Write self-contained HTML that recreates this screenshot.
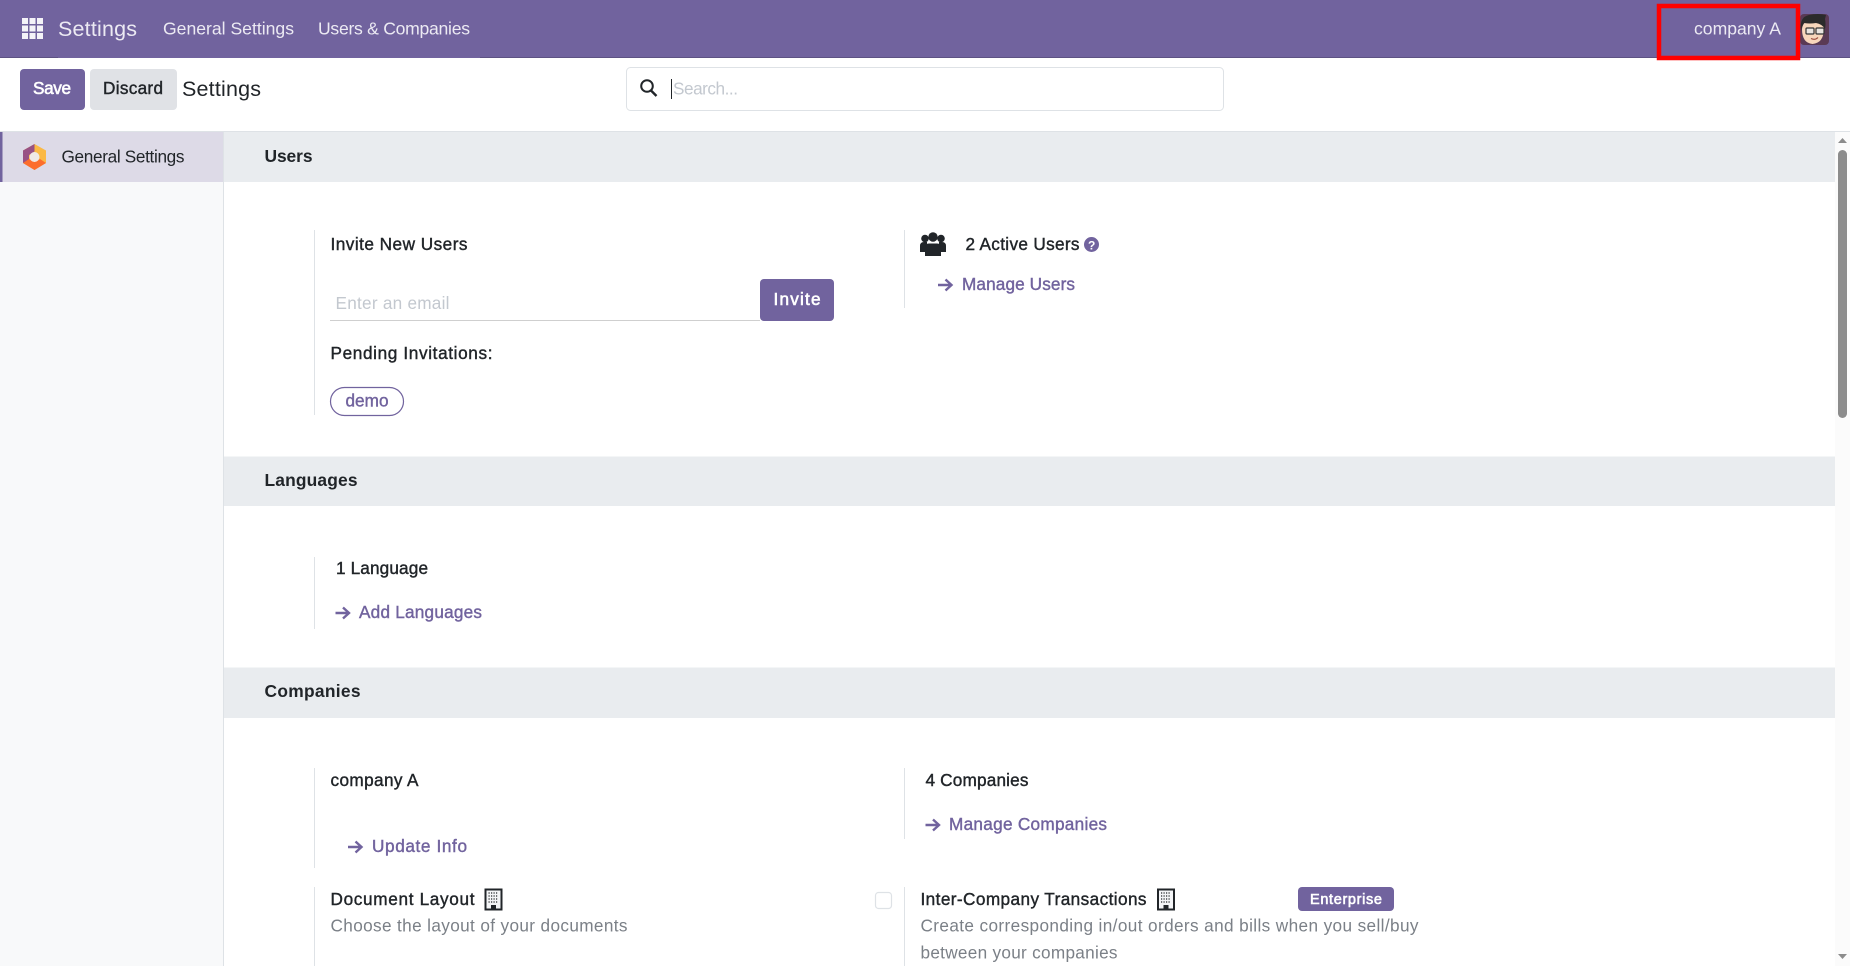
<!DOCTYPE html>
<html lang="en">
<head>
<meta charset="utf-8">
<title>Settings</title>
<style>
html,body{margin:0;padding:0;width:1850px;height:966px;overflow:hidden;background:#fff}
svg{display:block}
text{font-family:"Liberation Sans",sans-serif;font-size:17.2px;fill:#212529;white-space:pre}
.m{stroke:#212529;stroke-width:.4px}
.nav{fill:#eceaf3;font-size:17.6px}
.lnk{fill:#71639e;stroke:#71639e;stroke-width:.4px}
.mut{fill:#7b8087}
.w{fill:#fff;stroke:#fff;stroke-width:.6px}
.h{font-weight:bold;font-size:17.4px}
</style>
</head>
<body>
<svg width="1850" height="966" viewBox="0 0 1850 966" xmlns="http://www.w3.org/2000/svg">
  <defs>
    <g id="arr"><path d="M1 7H14M8.5 1.500L14.500 7L8.500 12.500" fill="none" stroke="#71639e" stroke-width="2.400"/></g>
    <g id="bld">
      <rect x="1" y="1" width="16" height="20" fill="#f4f5f7" stroke="#212529" stroke-width="2"/>
      <path d="M4 4.500H14M4 7.500H14M4 10.500H14M4 13.500H14" stroke="#212529" stroke-width="1.200" stroke-dasharray="1.200 1.300" fill="none"/>
      <rect x="6.500" y="16.500" width="5" height="4.500" fill="#212529"/>
    </g>
  </defs>

  <!-- Navbar -->
  <rect width="1850" height="58" fill="#71639e"/>
  <rect y="57" width="58" height="1" fill="#5d5283"/>
  <rect x="480" y="57" width="1370" height="1" fill="#5d5283"/>
  <g fill="#f4f3f8">
    <rect x="22" y="18" width="6" height="6"/><rect x="29.500" y="18" width="6" height="6"/><rect x="37" y="18" width="6" height="6"/>
    <rect x="22" y="25.500" width="6" height="6"/><rect x="29.500" y="25.500" width="6" height="6"/><rect x="37" y="25.500" width="6" height="6"/>
    <rect x="22" y="33" width="6" height="6"/><rect x="29.500" y="33" width="6" height="6"/><rect x="37" y="33" width="6" height="6"/>
  </g>
  <text class="nav" x="58" y="36" style="font-size:21.500px" textLength="79" lengthAdjust="spacing">Settings</text>
  <text class="nav" x="163" y="34.500" textLength="131" lengthAdjust="spacing">General Settings</text>
  <text class="nav" x="318" y="34.500" textLength="152" lengthAdjust="spacing">Users &amp; Companies</text>
  <text class="nav" x="1694" y="34.500" textLength="87" lengthAdjust="spacing">company A</text>

  <!-- Avatar -->
  <rect x="1800" y="14" width="29" height="31" rx="4" fill="#5a3a55"/>
  <path d="M1802 29q0 14 10.500 15q11 -1 11.500 -15q-1 -9 -11 -9q-10 0 -11 9z" fill="#f7d6bb"/>
  <path d="M1801 31q-2 -14 8 -16q9 -2 17 0l-1 4q1 5 0 10q-3 -5 -9 -6q-6 1 -12 0q-2 3 -3 8z" fill="#2b2b2b"/>
  <rect x="1806" y="28" width="8" height="6" rx="1" fill="#e9e4df" stroke="#333" stroke-width="1.200"/>
  <rect x="1816" y="28" width="8" height="6" rx="1" fill="#e9e4df" stroke="#333" stroke-width="1.200"/>
  <path d="M1811 38.500q4 2 7 -1" fill="none" stroke="#9a4a3c" stroke-width="1.200"/>
  <rect x="1659" y="6" width="139" height="52" fill="none" stroke="#ff0000" stroke-width="4.500"/>

  <!-- Control panel -->
  <rect x="20" y="69" width="65" height="41" rx="4" fill="#71639e"/>
  <text class="w" x="33" y="94" textLength="38" lengthAdjust="spacing">Save</text>
  <rect x="90" y="69" width="87" height="41" rx="4" fill="#e0e2e6"/>
  <text class="m" x="103" y="94" textLength="60" lengthAdjust="spacing">Discard</text>
  <text x="182" y="96" style="font-size:21.500px" textLength="79" lengthAdjust="spacing">Settings</text>

  <rect x="626.500" y="67.500" width="597" height="43" rx="4" fill="#fff" stroke="#dee2e6"/>
  <circle cx="647" cy="86" r="5.800" fill="none" stroke="#212529" stroke-width="2"/>
  <path d="M651 90.500L656.500 96" stroke="#212529" stroke-width="2.400"/>
  <rect x="671" y="79" width="1" height="20" fill="#212529"/>
  <text x="673" y="94.500" style="fill:#c3c8cf" textLength="65" lengthAdjust="spacing">Search...</text>
  <rect y="131" width="1850" height="1" fill="#dee2e6"/>

  <!-- Sidebar -->
  <rect y="132" width="223" height="834" fill="#f8f9fa"/>
  <rect x="223" y="132" width="1" height="834" fill="#dee2e6"/>
  <rect y="132" width="223" height="50" fill="#dddae7"/>
  <rect y="132" width="2.500" height="50" fill="#71639e"/>
  <path d="M34.500 144L46 150.500V163L34.500 170L23 163V150.500z" fill="#fbb945"/>
  <path d="M34.500 144V151.500L29 155V161L23 163V150.500z" fill="#985184"/>
  <path d="M23 163L29 159L34.500 162L40 159L46 163L34.500 170z" fill="#fc6d2d"/>
  <circle cx="34.500" cy="157" r="5" fill="#efe9e6"/>
  <text x="61.500" y="162.500" textLength="123" lengthAdjust="spacing">General Settings</text>

  <!-- Section bands -->
  <rect x="224" y="132" width="1611" height="50" fill="#e9ecef"/>
  <text class="h" x="264.500" y="162" textLength="48" lengthAdjust="spacing">Users</text>
  <rect x="224" y="456.500" width="1611" height="49.500" fill="#e9ecef"/>
  <text class="h" x="264.500" y="486" textLength="93" lengthAdjust="spacing">Languages</text>
  <rect x="224" y="667.500" width="1611" height="50.500" fill="#e9ecef"/>
  <text class="h" x="264.500" y="697" textLength="96" lengthAdjust="spacing">Companies</text>

  <!-- Vertical rules -->
  <g fill="#dee2e6">
    <rect x="314" y="230" width="1" height="185"/>
    <rect x="904" y="230" width="1" height="78"/>
    <rect x="314" y="557" width="1" height="72"/>
    <rect x="314" y="768" width="1" height="100"/>
    <rect x="904" y="768" width="1" height="71"/>
    <rect x="314" y="887" width="1" height="79"/>
    <rect x="904" y="887" width="1" height="79"/>
  </g>

  <!-- Users -->
  <text class="m" x="330.500" y="250" textLength="137" lengthAdjust="spacing">Invite New Users</text>
  <text x="335.500" y="309" style="fill:#c3c8cf" textLength="114" lengthAdjust="spacing">Enter an email</text>
  <rect x="330" y="320" width="430" height="1" fill="#cfcfcf"/>
  <rect x="760" y="279" width="74" height="42" rx="4" fill="#71639e"/>
  <text class="w" x="773.500" y="305" textLength="47" lengthAdjust="spacing">Invite</text>
  <text class="m" x="330.500" y="359" textLength="162" lengthAdjust="spacing">Pending Invitations:</text>
  <rect x="330.500" y="387.500" width="73" height="28" rx="14" fill="#fff" stroke="#71639e" stroke-width="1.200"/>
  <text class="lnk" x="345.500" y="406.500" textLength="43" lengthAdjust="spacing">demo</text>

  <g fill="#212529">
    <circle cx="925" cy="238.500" r="3.800"/><circle cx="933" cy="237" r="4.700"/><circle cx="941" cy="238.500" r="3.800"/>
    <path d="M920 252v-6q0-4 4-4h3v10zM939 242h3q4 0 4 4v6h-7z"/>
    <path d="M925 256v-8q0-4.500 4-4.500h8q4 0 4 4.500v8z"/>
  </g>
  <text class="m" x="965.500" y="250" textLength="114" lengthAdjust="spacing">2 Active Users</text>
  <circle cx="1091.500" cy="244.500" r="7.500" fill="#71639e"/>
  <text x="1088" y="249.500" style="font-size:12px;font-weight:bold;fill:#fff">?</text>
  <use href="#arr" x="937" y="278"/>
  <text class="lnk" x="962" y="290" textLength="113" lengthAdjust="spacing">Manage Users</text>

  <!-- Languages -->
  <text class="m" x="336" y="574" textLength="92" lengthAdjust="spacing">1 Language</text>
  <use href="#arr" x="334.500" y="606"/>
  <text class="lnk" x="359" y="618" textLength="123" lengthAdjust="spacing">Add Languages</text>

  <!-- Companies -->
  <text class="m" x="330.500" y="786" textLength="88" lengthAdjust="spacing">company A</text>
  <use href="#arr" x="347" y="840"/>
  <text class="lnk" x="372" y="852" textLength="95" lengthAdjust="spacing">Update Info</text>
  <text class="m" x="925.500" y="786" textLength="103" lengthAdjust="spacing">4 Companies</text>
  <use href="#arr" x="924.500" y="818"/>
  <text class="lnk" x="949" y="830" textLength="158" lengthAdjust="spacing">Manage Companies</text>

  <text class="m" x="330.500" y="905" textLength="144" lengthAdjust="spacing">Document Layout</text>
  <use href="#bld" x="484.500" y="888.500"/>
  <text class="mut" x="330.500" y="931.500" textLength="297" lengthAdjust="spacing">Choose the layout of your documents</text>
  <rect x="875.500" y="892.500" width="16" height="16" rx="3" fill="#fff" stroke="#dee2e6" stroke-width="1.200"/>

  <text class="m" x="920.500" y="905" textLength="226" lengthAdjust="spacing">Inter-Company Transactions</text>
  <use href="#bld" x="1157" y="888.500"/>
  <rect x="1298" y="887" width="96" height="24" rx="4" fill="#71639e"/>
  <text class="w" x="1310" y="904" style="font-size:14.500px" textLength="72" lengthAdjust="spacing">Enterprise</text>
  <text class="mut" x="920.500" y="931.500" textLength="498" lengthAdjust="spacing">Create corresponding in/out orders and bills when you sell/buy</text>
  <text class="mut" x="920.500" y="958.500" textLength="197" lengthAdjust="spacing">between your companies</text>

  <!-- Scrollbar -->
  <rect x="1835" y="132" width="15" height="834" fill="#fbfbfb"/>
  <path d="M1838 143L1842.500 138L1847 143z" fill="#8c8c8c"/>
  <rect x="1838" y="150" width="9" height="268" rx="4.500" fill="#8c8c8c"/>
  <path d="M1838 954L1842.500 959L1847 954z" fill="#8c8c8c"/>
</svg>
</body>
</html>
